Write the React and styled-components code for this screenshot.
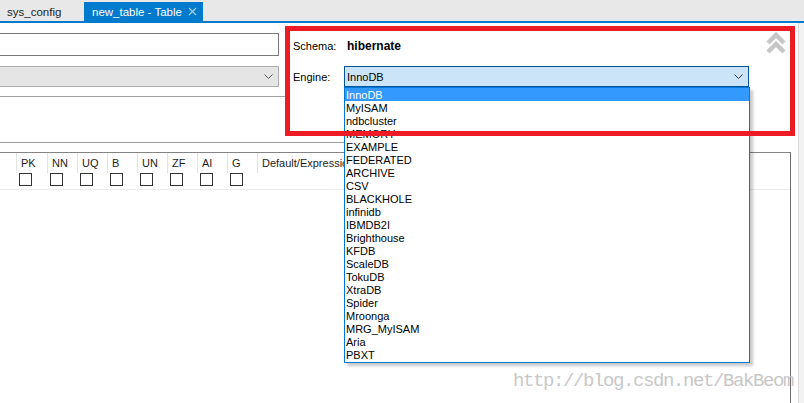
import React from "react";
import styled, { createGlobalStyle } from "styled-components";

const GlobalStyle = createGlobalStyle`
  html, body {
    margin: 0;
    padding: 0;
    background: #ffffff;
  }
  body {
    font-family: "Liberation Sans", Arial, sans-serif;
    font-size: 11px;
    color: #1e1e1e;
  }
`;

const engines = [
  "InnoDB",
  "MyISAM",
  "ndbcluster",
  "MEMORY",
  "EXAMPLE",
  "FEDERATED",
  "ARCHIVE",
  "CSV",
  "BLACKHOLE",
  "infinidb",
  "IBMDB2I",
  "Brighthouse",
  "KFDB",
  "ScaleDB",
  "TokuDB",
  "XtraDB",
  "Spider",
  "Mroonga",
  "MRG_MyISAM",
  "Aria",
  "PBXT",
];

const flags = ["PK", "NN", "UQ", "B", "UN", "ZF", "AI", "G"];

const Screen = styled.div`
  position: relative;
  width: 804px;
  height: 403px;
  overflow: hidden;
  display: flex;
  flex-direction: column;
  background: #ffffff;
`;

const TabBar = styled.div`
  height: 21px;
  flex-shrink: 0;
  display: flex;
  align-items: flex-end;
  background: #e8e8e8;
  border-bottom: 2px solid #007acc;
`;

const Tab = styled.div`
  box-sizing: border-box;
  width: ${({ $width }) => $width}px;
  height: 19px;
  display: flex;
  align-items: center;
  padding-left: ${({ $active }) => ($active ? 8 : 7)}px;
  font-size: 11.5px;
  color: ${({ $active }) => ($active ? "#ffffff" : "#1e1e1e")};
  background: ${({ $active }) => ($active ? "#007acc" : "transparent")};
  white-space: nowrap;
`;

const TabClose = styled.svg`
  margin-left: auto;
  margin-right: 6px;
  flex-shrink: 0;
`;

const Body = styled.div`
  flex: 1;
  display: flex;
  min-height: 0;
`;

const Main = styled.div`
  width: 798px;
  display: flex;
  flex-direction: column;
`;

const ScrollStrip = styled.div`
  flex: 1;
  background: #f2f2f2;
  border-left: 1px solid #dadada;
`;

const HeaderArea = styled.div`
  height: 119px;
  flex-shrink: 0;
  display: flex;
`;

const LeftForm = styled.div`
  width: 287px;
  flex-shrink: 0;
  display: flex;
  flex-direction: column;
  padding-top: 10px;
  gap: 10px;
`;

const TextInput = styled.div`
  box-sizing: border-box;
  width: 281px;
  height: 23px;
  margin-left: -2px;
  border: 1px solid #7a7a7a;
  background: #ffffff;
`;

const ComboBox = styled.div`
  box-sizing: border-box;
  width: ${({ $width }) => $width}px;
  height: 21px;
  margin-left: ${({ $offset }) => $offset || 0}px;
  display: flex;
  align-items: center;
  padding: 0 5px 0 2px;
  border: 1px solid ${({ $focused }) => ($focused ? "#005499" : "#adadad")};
  background: ${({ $focused }) => ($focused ? "#cce4f7" : "#e5e5e5")};
  color: #000000;
  font-size: 11px;
  svg {
    margin-left: auto;
  }
`;

const Divider = styled.div`
  height: 1px;
  margin-top: -1px;
  background: #a0a0a0;
`;

const RightPanel = styled.div`
  flex: 1;
  display: flex;
  justify-content: space-between;
  align-items: flex-start;
  padding: 9px 12px 0 6px;
`;

const Fields = styled.div`
  margin-top: 3px;
  display: flex;
  flex-direction: column;
  gap: 10px;
`;

const FieldRow = styled.div`
  height: 21px;
  display: flex;
  align-items: center;
`;

const FieldLabel = styled.span`
  width: 51px;
  flex-shrink: 0;
  color: #000000;
  font-size: 11px;
`;

const SchemaName = styled.span`
  margin-left: 3px;
  font-size: 12px;
  font-weight: bold;
  color: #000000;
`;

const EngineBox = styled.div`
  position: relative;
  height: 21px;
`;

const DropList = styled.ul`
  position: absolute;
  top: 21px;
  left: 0;
  z-index: 5;
  box-sizing: border-box;
  width: 406px;
  margin: 0;
  padding: 0 0 1px;
  list-style: none;
  background: #ffffff;
  border: 1px solid #0078d7;
  box-shadow: 3px 3px 3px rgba(0, 0, 0, 0.22);
`;

const DropItem = styled.li`
  height: 13px;
  line-height: 14px;
  padding-left: 1px;
  font-size: 11px;
  color: ${({ $selected }) => ($selected ? "#ffffff" : "#000000")};
  background: ${({ $selected }) => ($selected ? "#3399ff" : "transparent")};
  white-space: nowrap;
`;

const SectionRule = styled.div`
  width: 470px;
  height: 1px;
  flex-shrink: 0;
  background: #a0a0a0;
`;

const ColumnsTable = styled.div`
  flex: 1;
  width: 791px;
  box-sizing: border-box;
  margin-top: 9px;
  border-top: 1px solid #848484;
  border-right: 1px solid #6e6e6e;
`;

const HeaderRow = styled.div`
  height: 36px;
  display: flex;
  border-bottom: 1px solid #ececec;
`;

const Gutter = styled.div`
  width: 16px;
  flex-shrink: 0;
`;

const HeaderCell = styled.div`
  width: ${({ $width }) => ($width ? `${$width}px` : "auto")};
  flex: ${({ $width }) => ($width ? "0 0 auto" : "1")};
  display: flex;
  flex-direction: column;
`;

const HeaderLabel = styled.div`
  height: 20px;
  line-height: 20px;
  padding-left: 4px;
  border-left: 1px solid #e3e3e3;
  font-size: 11px;
  color: #1e1e1e;
  white-space: nowrap;
`;

const CheckBox = styled.div`
  box-sizing: border-box;
  width: 13px;
  height: 13px;
  margin-left: 3px;
  border: 1px solid #333333;
  background: #ffffff;
`;

const Highlight = styled.div`
  position: absolute;
  left: 285px;
  top: 26px;
  width: 510px;
  height: 110px;
  box-sizing: border-box;
  border: 5px solid #ed1c24;
  z-index: 10;
  pointer-events: none;
`;

const Watermark = styled.div`
  position: absolute;
  left: 513px;
  top: 371px;
  font-family: "Liberation Mono", "Courier New", monospace;
  font-size: 19px;
  line-height: 20px;
  letter-spacing: -1.4px;
  color: #c8c8c8;
  white-space: nowrap;
  z-index: 11;
`;

const Chevron = ({ color = "#333333" }) => (
  <svg width="9" height="5" viewBox="0 0 9 5">
    <path d="M0.5 0.5 L4.5 4.5 L8.5 0.5" fill="none" stroke={color} strokeWidth="1" />
  </svg>
);

const CollapseIcon = () => (
  <svg width="20" height="22" viewBox="0 0 20 22">
    <polyline points="2,11 10,3 18,11" fill="none" stroke="#c6c6c6" strokeWidth="4.5" />
    <polyline points="2,20 10,12 18,20" fill="none" stroke="#c6c6c6" strokeWidth="4.5" />
  </svg>
);

const App = () => {
  return (
    <>
      <GlobalStyle />
      <Screen>
        <TabBar>
          <Tab $width={84}>sys_config</Tab>
          <Tab $width={119} $active>
            new_table - Table
            <TabClose width="9" height="9" viewBox="0 0 9 9">
              <path d="M1 1 L8 8 M8 1 L1 8" stroke="#a9cdee" strokeWidth="1.2" />
            </TabClose>
          </Tab>
        </TabBar>
        <Body>
          <Main>
            <HeaderArea>
              <LeftForm>
                <TextInput />
                <ComboBox $width={281} $offset={-2}>
                  <Chevron color="#555555" />
                </ComboBox>
                <Divider />
              </LeftForm>
              <RightPanel>
                <Fields>
                  <FieldRow>
                    <FieldLabel>Schema:</FieldLabel>
                    <SchemaName>hibernate</SchemaName>
                  </FieldRow>
                  <FieldRow>
                    <FieldLabel>Engine:</FieldLabel>
                    <EngineBox>
                      <ComboBox $width={405} $focused>
                        InnoDB
                        <Chevron />
                      </ComboBox>
                      <DropList>
                        {engines.map((name, i) => (
                          <DropItem key={name} $selected={i === 0}>
                            {name}
                          </DropItem>
                        ))}
                      </DropList>
                    </EngineBox>
                  </FieldRow>
                </Fields>
                <CollapseIcon />
              </RightPanel>
            </HeaderArea>
            <SectionRule />
            <ColumnsTable>
              <HeaderRow>
                <Gutter />
                {flags.map((flag, i) => (
                  <HeaderCell key={flag} $width={i === 0 ? 31 : 30}>
                    <HeaderLabel>{flag}</HeaderLabel>
                    <CheckBox />
                  </HeaderCell>
                ))}
                <HeaderCell>
                  <HeaderLabel>Default/Expression</HeaderLabel>
                </HeaderCell>
              </HeaderRow>
            </ColumnsTable>
          </Main>
          <ScrollStrip />
        </Body>
        <Highlight />
        <Watermark>http://blog.csdn.net/BakBeom</Watermark>
      </Screen>
    </>
  );
};

export default App;
